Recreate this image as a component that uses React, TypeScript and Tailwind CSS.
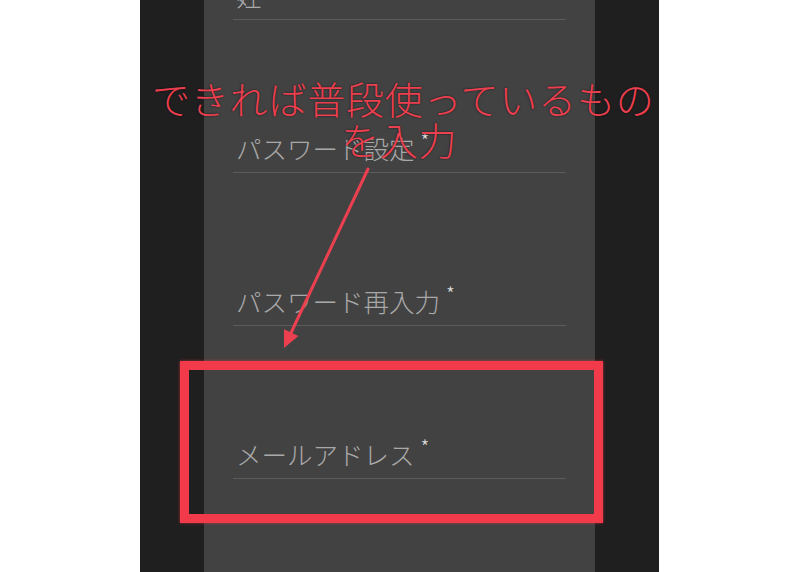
const fields = ["姓", "パスワード設定", "パスワード再入力", "メールアドレス"]

function Field({ label }: { label: string }) {
  return (
    <div className="h-[153px] flex flex-col justify-end">
      <div className="h-[36px] leading-[36px] pl-[3px] text-[25.5px] font-light text-[#a9a9a9] whitespace-nowrap">
        {label}
        <span className="relative -top-[7px] ml-[6px] text-[20px] text-[#dedede] align-top">*</span>
      </div>
      <div className="mt-[6px] h-px bg-[#5c5c5c]" />
    </div>
  )
}

export default function App() {
  return (
    <div
      className="relative w-[800px] h-[572px] overflow-hidden bg-white"
      style={{ fontFamily: '"Noto Sans CJK JP", "Noto Sans", sans-serif' }}
    >
      <div className="ml-[140px] w-[519px] h-full bg-[#1f1f1f] flex justify-center">
        <div className="w-[391px] h-full bg-[#424242] px-[29px] overflow-hidden">
          <div className="-mt-[133px]">
            {fields.map((f) => (
              <Field key={f} label={f} />
            ))}
          </div>
        </div>
      </div>

      {/* annotation */}
      <div className="absolute left-[152px] top-[77px] text-[38px] leading-[41px] tracking-[0.8px] font-light text-[#ec3f4f] whitespace-nowrap [text-shadow:0_0_2px_rgba(0,0,0,0.7)]">
        <div>できれば普段使っているもの</div>
        <div className="pl-[189px]">を入力</div>
      </div>

      <svg className="absolute left-0 top-0" width="800" height="572" viewBox="0 0 800 572">
        <line x1="368" y1="169" x2="290" y2="335" stroke="#ec3f4f" strokeWidth="3" strokeLinecap="round" />
        <polygon points="284,348 298.4,336 284,329.2" fill="#ec3f4f" />
      </svg>

      <div className="absolute left-[180px] top-[361px] w-[423px] h-[162px] border-[9px] border-[#f23a4b] shadow-[0_0_3px_rgba(242,58,75,0.6)]" />
    </div>
  )
}
